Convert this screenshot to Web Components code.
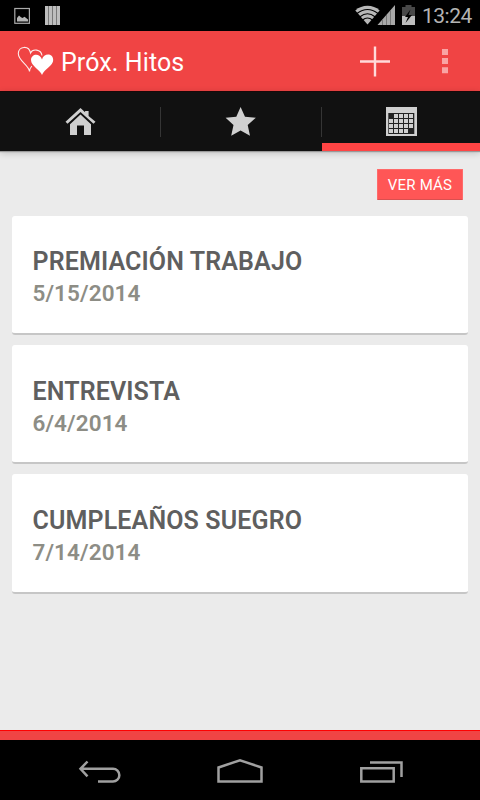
<!DOCTYPE html>
<html lang="es">
<head>
<meta charset="utf-8">
<title>Próx. Hitos</title>
<style>
  body {
    margin: 0;
    font-family: Roboto, "Liberation Sans", sans-serif;
  }
</style>
</head>
<body>
<hitos-app></hitos-app>

<script>
class StatusBar extends HTMLElement {
  constructor() {
    super();
    this.attachShadow({ mode: 'open' });

    this.shadowRoot.innerHTML = `
      <style>
        :host {
          display: flex;
          justify-content: space-between;
          box-sizing: border-box;
          height: 31px;
          background: #000;
          color: #b4b4b4;
        }
        .right {
          display: flex;
        }
        svg {
          display: block;
        }
        .clock {
          font-size: 21px;
          line-height: 33px;
          width: 50px;
          margin-right: 8px;
          white-space: nowrap;
          letter-spacing: -0.5px;
        }
      </style>
      <svg width="70" height="31" viewBox="0 0 70 31">
        <rect x="14.8" y="8.5" width="14.6" height="14.8" fill="none" stroke="#aaa" stroke-width="1.2"/>
        <path d="M17 21.500v-3.500l2-2.5 2 1.8 1.5 .7 2-1.2 3.500 2.700v2z" fill="#b4b4b4"/>
        <rect x="45" y="6" width="15" height="19" fill="#777"/>
        <path d="M45 6h3v19h-3zM49 6h3v19h-3zM53 6h3v19h-3zM57 6h3v19h-3z" fill="#bdbdbd"/>
      </svg>
      <div class="right">
        <svg width="67" height="31" viewBox="355 0 67 31">
          <path d="M355.3 10.500C362 4.300 373 4.300 379.700 10.500L367.500 24.500z" fill="#b8b8b8"/>
          <path d="M357 13.500Q367.500 5.500 378 13.500M360 16.800Q367.500 10.800 375 16.800M362.500 20Q367.500 16 372.500 20" fill="none" stroke="#000" stroke-width="1.100"/>
          <path d="M395 5V25H377.500z" fill="#a8a8a8"/>
          <path d="M382.500 19v6M386.500 15v10M390.500 10v15" stroke="#777" stroke-width="1"/>
          <path d="M405.500 5h6v2h3.500v18h-13V7h3.500z" fill="#484848"/>
          <path d="M402 16h13v9h-13z" fill="#bdbdbd"/>
          <path d="M410.500 9.500L405 17h3l-2.500 6 6.500-8h-3.500z" fill="#000"/>
        </svg>
        <span class="clock">13:24</span>
      </div>
    `;
  }
}

class ActionBar extends HTMLElement {
  constructor() {
    super();
    this.attachShadow({ mode: 'open' });

    this.shadowRoot.innerHTML = `
      <style>
        :host {
          display: flex;
          box-sizing: border-box;
          height: 60px;
          background: #f04444;
          color: #fff;
        }
        svg {
          display: block;
        }
        .title {
          flex: 1;
          font-size: 25px;
          line-height: 64px;
          letter-spacing: 0.1px;
          white-space: nowrap;
        }
      </style>
      <svg width="61" height="60" viewBox="0 31 61 60">
        <path d="M29.500 71.500C29 65 18.300 61 18.300 53.500C18.500 46 29 45 30.500 53C32.500 48.500 41 49 42 55.500M29.500 71.500Q29.700 68.500 31.800 66" fill="none" stroke="#fff" stroke-width="1.100" stroke-opacity=".9"/>
        <path d="M42 75C40.500 70 31 66 31 60C31 53.500 40 52.500 42 59.500C43.500 53 53 52.500 53.200 60C53.300 66 44 69 42 75z" fill="#fff"/>
      </svg>
      <div class="title"><slot></slot></div>
      <svg width="125" height="60" viewBox="355 31 125 60">
        <path d="M360 61.500h30M375 46.500v30" stroke="#ffdada" stroke-width="2.400"/>
        <path d="M442 49h6v6h-6zM442 58h6v6h-6zM442 67.300h6v6h-6z" fill="#f9a3a3"/>
      </svg>
    `;
  }
}

class TabItem extends HTMLElement {
  constructor() {
    super();
    this.attachShadow({ mode: 'open' });

    this.shadowRoot.innerHTML = `
      <style>
        :host {
          display: flex;
          justify-content: center;
          box-sizing: border-box;
          height: 59px;
          padding-top: 14px;
        }
        :host([active]) {
          border-bottom: 8px solid #ff4444;
        }
        ::slotted(svg) {
          display: block;
          width: 32px;
          height: 32px;
        }
      </style>
      <slot></slot>
    `;
  }
}

class TabBar extends HTMLElement {
  constructor() {
    super();
    this.attachShadow({ mode: 'open' });

    this.shadowRoot.innerHTML = `
      <style>
        :host {
          display: grid;
          grid-template-columns: 160px 1px 160px 1px 158px;
          align-items: center;
          height: 60px;
          background: #111;
          border-top: 1px solid #1a0808;
          box-sizing: border-box;
          box-shadow: 0 1px 1px #999, 0 2px 7px rgba(0, 0, 0, .2);
          position: relative;
        }
        .divider {
          height: 30px;
          background: #353535;
        }
      </style>
      <tab-item>
        <svg viewBox="0 0 32 32">
          <path d="M1.500 15.800L16.500 2l4.600 4.300V5h3.500v5L31.500 15.800l-2 2L16.500 6 3.500 17.800z" fill="#d0d0d0"/>
          <path d="M16.500 8.500L27 18.300V29h-7V19.500h-7V29H6V18.300z" fill="#d0d0d0"/>
        </svg>
      </tab-item>
      <span class="divider"></span>
      <tab-item>
        <svg viewBox="0 0 32 32">
          <path d="M15.600 1l4.400 9.700 10.800 1.100-8.100 7.300 2.300 10.700-9.400-5.400-9.400 5.400 2.300-10.700L.6 11.800l10.700-1.100z" fill="#d0d0d0"/>
        </svg>
      </tab-item>
      <span class="divider"></span>
      <tab-item active>
        <svg viewBox="385 105 32 32">
          <path d="M386 106h31v29h-31z" fill="#d0d0d0"/>
          <path d="M388.300 112h26v21h-26z" fill="#222"/>
          <path d="M394 113h4v4h-4zM399 113h4v4h-4zM404 113h4v4h-4zM409 113h4v4h-4zM389 118h4v4h-4zM394 118h4v4h-4zM399 118h4v4h-4zM404 118h4v4h-4zM409 118h4v4h-4zM389 123h4v4h-4zM394 123h4v4h-4zM399 123h4v4h-4zM404 123h4v4h-4zM409 123h4v4h-4zM389 128h4v4h-4zM394 128h4v4h-4zM399 128h4v4h-4zM404 128h4v4h-4z" fill="#d0d0d0"/>
        </svg>
      </tab-item>
    `;
  }
}

class MoreButton extends HTMLElement {
  constructor() {
    super();
    this.attachShadow({ mode: 'open' });

    this.shadowRoot.innerHTML = `
      <style>
        :host {
          display: block;
        }
        button {
          display: block;
          box-sizing: border-box;
          width: 86px;
          height: 31px;
          padding: 0;
          border: 1px solid #ff6a6a;
          border-bottom: 1px solid #d95050;
          border-radius: 1px;
          background: #ff5656;
          color: #fff;
          font: 15px/30px Roboto, "Liberation Sans", sans-serif;
          letter-spacing: 0.2px;
          white-space: nowrap;
        }
      </style>
      <button><slot></slot></button>
    `;
  }
}

class MilestoneCard extends HTMLElement {
  constructor() {
    super();
    this.attachShadow({ mode: 'open' });

    this.shadowRoot.innerHTML = `
      <style>
        :host {
          display: block;
          box-sizing: border-box;
          height: 119.400px;
          padding: 30.800px 20.500px 0;
          background: #fff;
          border-bottom: 2px solid #c6c6c6;
          border-radius: 3px;
          white-space: nowrap;
        }
        .name {
          font-size: 25px;
          line-height: 32px;
          font-weight: 600;
          letter-spacing: 0.13px;
          color: #5f5f5f;
        }
        .date {
          font-size: 22.500px;
          line-height: 31px;
          font-weight: 600;
          letter-spacing: 0.1px;
          color: #8d8d85;
        }
      </style>
      <div class="name"><slot></slot></div>
      <div class="date"><slot name="date"></slot></div>
    `;
  }
}

class NavBar extends HTMLElement {
  constructor() {
    super();
    this.attachShadow({ mode: 'open' });

    this.shadowRoot.innerHTML = `
      <style>
        :host {
          display: block;
          height: 60px;
          background: #000;
        }
        svg {
          display: block;
        }
      </style>
      <svg width="480" height="60" viewBox="0 740 480 60" fill="none" stroke="#a0a0a0" stroke-width="2.500">
        <path d="M80.500 768.800h32.500a6.300 6.300 0 0 1 0 12.700H98M87.500 761.500l-7 7.300 7 7.500"/>
        <path d="M218.500 767.500l21.500-7.300 21.500 7.300v14h-43z"/>
        <path d="M361.300 768.300h32.400v13.300h-32.400zM370 762.500h31.500V777"/>
      </svg>
    `;
  }
}

class HitosApp extends HTMLElement {
  constructor() {
    super();
    this.attachShadow({ mode: 'open' });

    this.shadowRoot.innerHTML = `
      <style>
        :host {
          display: flex;
          flex-direction: column;
          width: 480px;
          height: 800px;
          overflow: hidden;
          background: #ebebeb;
        }
        main {
          flex: 1;
          padding: 18px 12px 0;
        }
        more-button {
          width: 86px;
          margin: 0 5px 15.500px auto;
        }
        .list {
          display: grid;
          gap: 10px;
        }
        .strip {
          box-sizing: border-box;
          height: 10px;
          background: #f04444;
          border-top: 1px solid #f00;
        }
      </style>
      <status-bar></status-bar>
      <action-bar>Próx. Hitos</action-bar>
      <tab-bar></tab-bar>
      <main>
        <more-button>VER MÁS</more-button>
        <div class="list">
          <milestone-card>PREMIACIÓN TRABAJO<span slot="date">5/15/2014</span></milestone-card>
          <milestone-card>ENTREVISTA<span slot="date">6/4/2014</span></milestone-card>
          <milestone-card>CUMPLEAÑOS SUEGRO<span slot="date">7/14/2014</span></milestone-card>
        </div>
      </main>
      <div class="strip"></div>
      <nav-bar></nav-bar>
    `;
  }
}

customElements.define('status-bar', StatusBar);
customElements.define('action-bar', ActionBar);
customElements.define('tab-item', TabItem);
customElements.define('tab-bar', TabBar);
customElements.define('more-button', MoreButton);
customElements.define('milestone-card', MilestoneCard);
customElements.define('nav-bar', NavBar);
customElements.define('hitos-app', HitosApp);
</script>
</body>
</html>
